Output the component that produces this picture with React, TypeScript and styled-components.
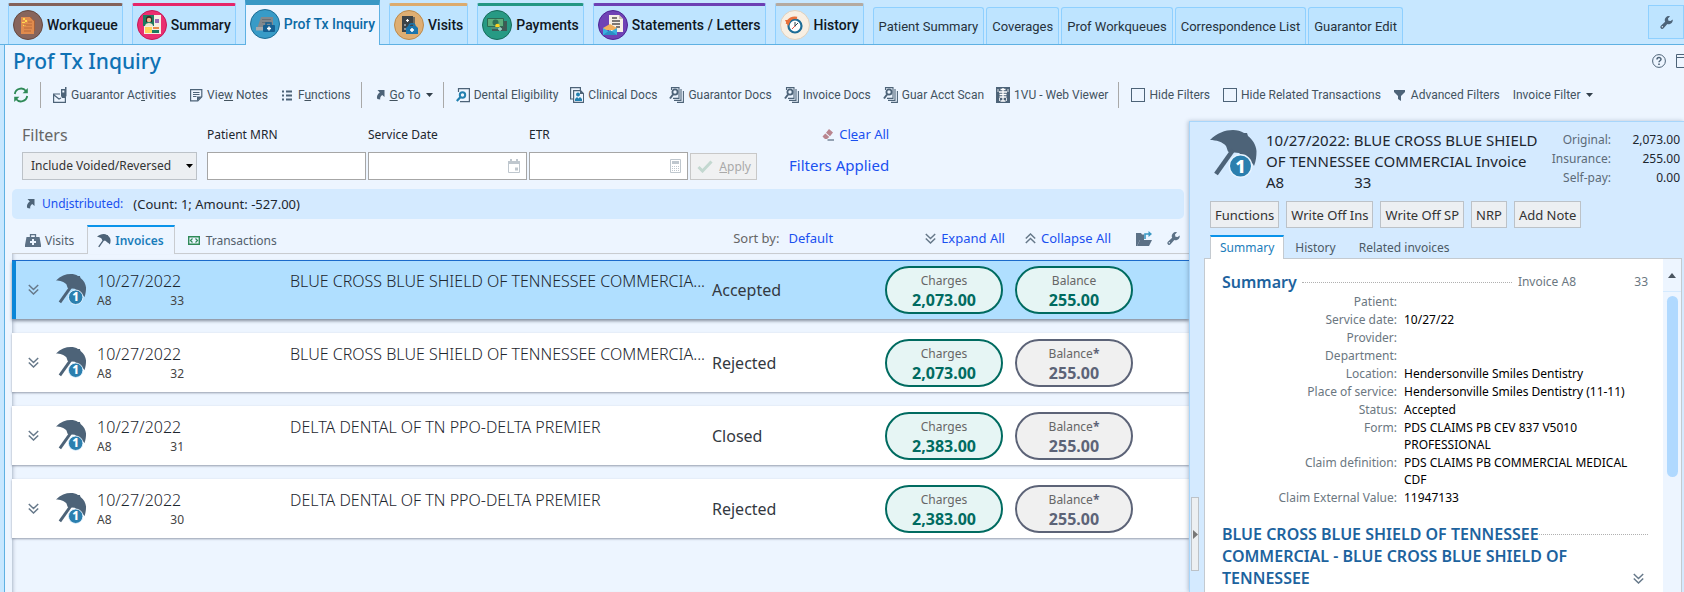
import React from "react";
import styled, { createGlobalStyle, css } from "styled-components";

const slate = "#4d6378";
const link = "#1a50f0";
const ui = `"Noto Sans", "Open Sans", sans-serif`;

const GlobalStyle = createGlobalStyle`
  * { box-sizing: border-box; }
  body { margin: 0; background: #c7e7ff; font: 12px/18px ${ui}; color: #1d262e; }
  button, input, select { font: inherit; color: inherit; margin: 0; }
  a { color: ${link}; text-decoration: none; }
  ul, dl, dd, h1, h2, p { margin: 0; padding: 0; font-weight: inherit; }
`;

const Screen = styled.div`
  display: flex;
  flex-direction: column;
  height: 100vh;
  overflow: hidden;
`;

/* ---------- activity tabs ---------- */
const TabBar = styled.nav`
  display: flex;
  align-items: flex-end;
  flex: none;
  height: 45px;
  padding-left: 8px;
  border-bottom: 1px solid #5fb1e3;
  font-family: Roboto, sans-serif;
`;

const ActivityTab = styled.button<{ $accent: string; $active?: boolean }>`
  display: flex;
  align-items: center;
  gap: 4px;
  flex: none;
  height: 41px;
  margin-right: 9px;
  padding: 0 4px;
  border: 1px solid #8fd0ff;
  border-top: 3px solid ${(p) => p.$accent};
  border-bottom: 0;
  border-radius: 2px 2px 0 0;
  background: #bee4ff;
  color: #10181f;
  font-size: 14px;
  font-weight: 500;
  white-space: nowrap;
  ${(p) =>
    p.$active &&
    css`
      height: 45px;
      margin-bottom: -1px;
      padding-bottom: 2px;
      border-top-width: 5px;
      border-color: ${p.$accent} #5fb1e3 #5fb1e3;
      border-radius: 0;
      background: #edf5ff;
      color: #0c6ba6;
    `}
`;

const PlainTab = styled.button`
  flex: none;
  height: 37px;
  margin-right: 2px;
  padding: 2px 5px 0;
  border: 1px solid #8fd0ff;
  border-bottom: 0;
  border-radius: 3px 3px 0 0;
  background: #bee4ff;
  color: #26323c;
  font-size: 13px;
  white-space: nowrap;
`;

const TabSettings = styled.button`
  display: grid;
  place-items: center;
  flex: none;
  align-self: flex-start;
  width: 36px;
  height: 34px;
  margin: 5px 0 0 auto;
  padding: 0;
  border: 1px solid #8fd0ff;
  background: #bee4ff;
`;

/* ---------- page frame ---------- */
const Page = styled.main`
  display: flex;
  flex-direction: column;
  flex: 1;
  min-height: 0;
  margin-left: 4px;
  border-left: 1px solid #5fb1e3;
  background: #edf5ff;
`;

const TitleRow = styled.header`
  display: flex;
  align-items: center;
  gap: 10px;
  height: 32px;
  padding-left: 8px;
  h1 {
    flex: 1;
    color: #0f72b5;
    font-size: 21px;
    font-weight: 500;
    line-height: 30px;
  }
`;

const Toolbar = styled.div`
  display: flex;
  align-items: center;
  gap: 12px;
  height: 26px;
  margin: 5px 0 13px;
  padding-left: 8px;
  color: #43535f;
  font-family: Roboto, sans-serif;
`;

const ToolGroup = styled.div<{ $gap: number }>`
  display: flex;
  align-items: center;
  gap: ${(p) => p.$gap}px;
`;

const ToolButton = styled.button`
  display: flex;
  align-items: center;
  gap: 4px;
  padding: 0;
  border: 0;
  background: none;
  white-space: nowrap;
`;

const ToolCheck = styled.label`
  display: flex;
  align-items: center;
  gap: 4px;
  white-space: nowrap;
  input {
    appearance: none;
    width: 14px;
    height: 14px;
    border: 1px solid ${slate};
  }
`;

const Divider = styled.span`
  width: 1px;
  height: 26px;
  margin-left: -2px;
  background: #a9a9a9;
`;

const Columns = styled.div`
  display: flex;
  flex: 1;
  min-height: 0;
`;

const Left = styled.section`
  display: flex;
  flex-direction: column;
  flex: 1;
  min-width: 0;
  padding: 4px 0 0 7px;
`;

/* ---------- filters ---------- */
const FilterRow = styled.form`
  display: flex;
  align-items: flex-end;
  padding-left: 10px;
`;

const Field = styled.div`
  position: relative;
  width: 159px;
  margin-right: 2px;
  label {
    display: block;
    margin-bottom: 7px;
    line-height: 20px;
  }
  input {
    display: block;
    width: 100%;
    height: 28px;
    border: 1px solid #a6a6a6;
    background: #fff;
  }
  svg {
    position: absolute;
    right: 7px;
    bottom: 7px;
  }
`;

const VoidedField = styled.div`
  position: relative;
  width: 175px;
  margin-right: 10px;
  label {
    display: block;
    margin-bottom: 7px;
    color: #666;
    font-size: 16px;
    line-height: 20px;
  }
  select {
    appearance: none;
    display: block;
    width: 100%;
    height: 28px;
    padding: 0 8px;
    border: 1px solid #bcc2c8;
    border-radius: 0;
    background: #eceff2;
    color: #333;
  }
  svg {
    position: absolute;
    right: 4px;
    bottom: 12px;
  }
`;

const ApplyButton = styled.button`
  display: flex;
  align-items: center;
  justify-content: space-between;
  width: 67px;
  height: 27px;
  padding: 0 5px 0 6px;
  border: 1px solid #c8c8c8;
  background: #f0f1f2;
  &:disabled { color: #a9a9a9; }
`;

const FilterLinks = styled.div`
  display: flex;
  flex-direction: column;
  align-items: flex-end;
  gap: 12px;
  margin-left: 32px;
  padding-bottom: 5px;
  font-size: 13px;
  a { display: flex; align-items: center; gap: 5px; }
  a:last-child { font-size: 15px; line-height: 20px; }
`;

const Undistributed = styled.div`
  display: flex;
  align-items: center;
  gap: 6px;
  height: 30px;
  margin: 9px 5px 6px 0;
  padding-left: 12px;
  border-radius: 5px;
  background: #d4eaff;
  span { margin-left: 4px; font-size: 13px; }
`;

/* ---------- list tabs ---------- */
const ListBar = styled.div`
  display: flex;
  align-items: center;
  height: 29px;
  padding-right: 9px;
  border-bottom: 1px solid #c9ccd0;
`;

const ListTab = styled.button<{ $active?: boolean }>`
  display: flex;
  align-items: center;
  gap: 4px;
  height: 29px;
  padding: 3px 13px 0;
  border: 0;
  background: none;
  color: #52606c;
  ${(p) =>
    p.$active &&
    css`
      padding: 1px 10px 0 9px;
      border: 1px solid #c9ccd0;
      border-top: 2px solid #0a93ea;
      border-bottom: 0;
      background: #edf5ff;
      color: #1a7dbb;
      font-weight: 600;
      margin-bottom: -1px;
    `}
`;

const ListActions = styled.div`
  display: flex;
  align-items: center;
  margin-left: auto;
  padding-bottom: 2px;
  color: #666;
  font-size: 13px;
  a { display: flex; align-items: center; gap: 5px; margin-left: 20px; }
  a:first-of-type { margin: 0 72px 0 9px; }
  button:first-of-type { margin-left: 25px; }
`;

const BareButton = styled.button`
  display: flex;
  padding: 0;
  border: 0;
  background: none;
  margin-left: 15px;
`;

/* ---------- invoice rows ---------- */
const InvoiceList = styled.ul`
  display: flex;
  flex-direction: column;
  gap: 14px;
  flex: 1;
  padding-top: 6px;
  list-style: none;
  box-shadow: inset 4px 0 4px -4px rgba(40, 60, 90, 0.5);
`;

const InvoiceRow = styled.li<{ $selected: boolean }>`
  display: grid;
  grid-template-columns: 85px 193px minmax(0, 422px) 1fr auto;
  height: 59px;
  padding-right: 56px;
  background: #fff;
  box-shadow: 0 1px 2px rgba(60, 70, 90, 0.5);
  ${(p) =>
    p.$selected &&
    css`
      background: linear-gradient(90deg, #0a86d8 4px, #b0dfff 4px);
      box-shadow: inset 0 1px #1b6bcb, 0 2px 3px rgba(60, 70, 90, 0.6);
    `}
`;

const Lead = styled.div`
  display: flex;
  align-items: center;
  gap: 17px;
  padding-left: 16px;
`;

const DateCell = styled.div`
  padding-top: 11px;
  font-weight: 300;
  p { font-size: 16px; line-height: 20px; }
  div { display: flex; justify-content: space-between; width: 87px; line-height: 19px; font-weight: 400; color: #444; }
`;

const Payer = styled.p`
  overflow: hidden;
  padding: 11px 2px 0 0;
  font-size: 16px;
  font-weight: 300;
  line-height: 20px;
  text-overflow: ellipsis;
  white-space: nowrap;
`;

const Status = styled.p`
  align-self: center;
  color: #33393f;
  font-size: 16px;
  line-height: 20px;
`;

const Pills = styled.div`
  display: flex;
  align-items: center;
  gap: 12px;
`;

const Pill = styled.div<{ $muted: boolean }>`
  display: flex;
  flex-direction: column;
  align-items: center;
  width: 118px;
  height: 48px;
  padding-top: 4px;
  border: 2px solid ${(p) => (p.$muted ? "#5c6377" : "#006b60")};
  border-radius: 24px;
  background: ${(p) => (p.$muted ? "#f0f0f0" : "#e6f5f4")};
  color: #666;
  b { color: #5c6377; }
  strong {
    color: ${(p) => (p.$muted ? "#5c6377" : "#006b60")};
    font-size: 16px;
    line-height: 20px;
  }
`;

/* ---------- detail panel ---------- */
const Panel = styled.aside`
  position: relative;
  display: flex;
  flex-direction: column;
  flex: none;
  width: 495px;
  padding: 8px 2px 0 14px;
  border: 1px solid #a8d6fb;
  border-width: 1px 0 0 1px;
  background: #d4eaff;
  box-shadow: -1px 0 4px rgba(50, 70, 100, 0.3);
`;

const Handle = styled.button`
  position: absolute;
  left: 1px;
  bottom: 21px;
  display: grid;
  place-items: center;
  width: 8px;
  height: 74px;
  padding: 0;
  border: 1px solid #bcc2c8;
  background: #eceff2;
`;

const PanelHead = styled.div`
  display: flex;
  padding-left: 6px;
  h2 {
    flex: 1;
    margin-left: 8px;
    font-size: 15px;
    line-height: 21px;
    white-space: nowrap;
  }
  h2 span { margin-right: 70px; }
`;

const Amounts = styled.dl`
  display: grid;
  grid-template-columns: auto 56px;
  column-gap: 13px;
  align-content: start;
  padding-right: 2px;
  text-align: right;
  line-height: 19px;
  dt { color: #5d6b78; }
`;

const PanelButtons = styled.div`
  display: flex;
  gap: 7px;
  margin-top: 8px;
  padding-left: 6px;
  button {
    height: 27px;
    padding: 0 4px;
    border: 1px solid #bcc2c8;
    background: #eceff2;
    color: #333;
    font-size: 13px;
    white-space: nowrap;
  }
`;

const PanelTabs = styled.div`
  position: relative;
  display: flex;
  margin: 7px 0 -1px 6px;
`;

const PanelTab = styled.button<{ $active?: boolean }>`
  height: 24px;
  padding: 2px 12px 0 11px;
  border: 0;
  background: none;
  color: #4c5a66;
  ${(p) =>
    p.$active &&
    css`
      padding: 0 9px;
      border: 1px solid #c4cad0;
      border-top: 2px solid #0a93ea;
      border-bottom: 0;
      background: #fff;
      color: #1a7dbb;
    `}
`;

const Sheet = styled.div`
  display: flex;
  flex: 1;
  min-height: 0;
  border: 1px solid #c4cad0;
  border-bottom: 0;
  background: #fff;
`;

const SheetBody = styled.div`
  flex: 1;
  min-width: 0;
  padding: 12px 15px 0 17px;
`;

const SectionTitle = styled.h2`
  color: #1d639e;
  font-size: 16px;
  font-weight: 600;
  line-height: 22px;
`;

const SummaryHead = styled.div`
  display: flex;
  align-items: center;
  color: #6b7781;
  span:last-child { width: 72px; text-align: right; }
`;

const Dots = styled.i`
  flex: 1;
  margin: 0 6px 0 5px;
  border-top: 1px dotted #b0b0b0;
`;

const Facts = styled.dl`
  display: grid;
  grid-template-columns: 175px 1fr;
  column-gap: 7px;
  row-gap: 1px;
  line-height: 17px;
  color: #000;
  dt { color: #6b7781; text-align: right; }
`;

const Coverage = styled.div`
  display: grid;
  grid-template-columns: auto 1fr;
  margin-top: 17px;
  i { margin: 11px 0 0; }
`;

const CoverageLast = styled.div`
  grid-column: 1 / -1;
  display: flex;
  justify-content: space-between;
  align-items: flex-end;
  padding: 0 4px 0 0;
  button { margin-bottom: 5px; }
`;

const Scroller = styled.div`
  display: flex;
  flex-direction: column;
  align-items: center;
  width: 18px;
  background: #edf5ff;
  button {
    display: grid;
    place-items: center;
    width: 18px;
    height: 33px;
    padding: 0;
    border: 0;
    border-bottom: 1px solid #d4eaff;
    background: none;
  }
`;

const Thumb = styled.span`
  width: 11px;
  height: 181px;
  margin-top: 4px;
  border-radius: 6px;
  background: #b0d9ff;
`;

/* ---------- icons ---------- */
const Drawing = styled.svg`
  flex: none;
`;

const Svg = ({ w, h, vb, children }: { w: number; h: number; vb?: string; children: React.ReactNode }) => (
  <Drawing width={w} height={h} viewBox={vb || `0 0 ${w} ${h}`} fill="none" aria-hidden="true">
    {children}
  </Drawing>
);

const Disc = ({ fill, ring, children }: { fill: string; ring: string; children: React.ReactNode }) => (
  <Svg w={30} h={30}>
    <circle cx="15" cy="15" r="14.5" fill={fill} stroke={ring} />
    {children}
  </Svg>
);

const WorkIcon = () => (
  <Disc fill="#87655c" ring="#65483f">
    <path d="M8 7h9l4 4v13H8z" fill="#e08b4d" />
    <path d="M17 7h2v3h3v11h-1V11z" fill="#a65f35" />
    <path d="M10 8h2v2h-2zM12 10h2v2h-2zM9 12h3v1H9zM10 15h3v1h-3z" fill="#ffd84f" />
    <path d="M11 15h8M11 18h8M11 21h7M15 12h4" stroke="#b8683a" />
  </Disc>
);
const SummaryIcon = () => (
  <Disc fill="#ea2e70" ring="#c51858">
    <path d="M7 5h17v19H7z" fill="#f4efe4" />
    <path d="M6 5h11v11H6z" fill="#1d7a5f" />
    <path d="M9 9c0-4 6-4 6 0v3H9z" fill="#3a2a22" />
    <circle cx="12" cy="10" r="2.2" fill="#f1b98d" />
    <path d="M8 16c0-4 8-4 8 0z" fill="#f0e3cf" />
    <path d="M8 17h7v6H8z" fill="#ffd45a" />
    <path d="M18 9h4v4h-4z" fill="#9a68b5" />
    <path d="M16 17h6v2h-6z" fill="#e98b4e" />
    <path d="M15 20h7v3h-7z" fill="#1d7a5f" />
  </Disc>
);
const ProfIcon = () => (
  <Disc fill="#389bc7" ring="#1d6c94">
    <path d="M11 8h12v8l-2 5H6l2-4z" fill="#82888d" />
    <path d="M12 10.500h9M12 13.500h9" stroke="#6a7075" />
    <path d="M6 18h12v3.500H6z" fill="#a3a9ad" />
    <rect x="13" y="16" width="12" height="7" rx="1" fill="#155f92" />
    <path d="M16 16v-2h5v2" stroke="#155f92" strokeWidth="1.5" />
    <path d="M19 17.500v4M17 19.500h4" stroke="#fff" strokeWidth="1.500" />
  </Disc>
);
const VisitsIcon = () => (
  <Disc fill="#deae72" ring="#bd8a4b">
    <path d="M8 6h11v16H8z" fill="#3c4347" />
    <path d="M19 7h2v9h-2z" fill="#6f6a5f" />
    <path d="M13.500 9v3M12 10.500h3" stroke="#fff" strokeWidth="1.200" />
    <path d="M10 14h2v2h-2zM10 18h2v2h-2z" fill="#8d9498" />
    <path d="M12 18l2-2h8l2 2v6H12z" fill="#1a75ad" />
    <path d="M15 16c0-3 6-3 6 0" stroke="#1a75ad" strokeWidth="1.500" />
    <path d="M18 18v4M16 20h4" stroke="#fff" strokeWidth="1.500" />
  </Disc>
);
const PaymentsIcon = () => (
  <Disc fill="#279a84" ring="#176b5a">
    <path d="M10 11h15v10H10z" fill="#3f5a55" />
    <path d="M5.500 8.500h16v8h-16z" fill="#5fae7c" stroke="#2d6a52" />
    <circle cx="13.500" cy="12.500" r="3" fill="#2f6f56" />
    <circle cx="15.500" cy="16" r="2.300" fill="#ffd21f" />
    <path d="M9 17h8v2H9z" fill="#4d8f78" />
    <path d="M18 17v4M16 19h4" stroke="#9fd8c8" strokeWidth="1.300" />
  </Disc>
);
const LettersIcon = () => (
  <Disc fill="#6f42b5" ring="#4d2595">
    <path d="M11 5h10l4 4v13H11z" fill="#f7f0e6" />
    <path d="M21 5v4h4z" fill="#cfc4b4" />
    <path d="M14 8h5M14 11h8M14 14h8M18 17h4" stroke="#56504d" strokeWidth="1.300" />
    <path d="M5 18l7-4 7 4v2H5z" fill="#f3b05b" />
    <path d="M5 18l7 4 7-4v7H5z" fill="#3bb0e0" />
    <path d="M5 25l7-5 7 5z" fill="#2a90c4" />
  </Disc>
);
const HistoryIcon = () => (
  <Disc fill="#f8efe3" ring="#e0d0bd">
    <circle cx="15" cy="16" r="6.500" fill="#fff" stroke="#1d6c96" strokeWidth="2.200" />
    <path d="M7 14c1-5 6-7 10-6" stroke="#e8703a" strokeWidth="2.600" />
    <path d="M5 10l6 0-3 6z" fill="#e8703a" />
    <path d="M15 12v4.500M15 16l3-3" stroke="#37474f" />
    <path d="M15 16l-3 3" stroke="#e74c3c" />
  </Disc>
);

const Wrench = ({ color = slate }: { color?: string }) => (
  <Svg w={13} h={13} vb="0 0 16 16">
    <path d="M15.600 4.200a5 5 0 0 1-6.600 5.600l-4.600 5.300a2.200 2.200 0 0 1-3.300-3l5.200-4.900A5 5 0 0 1 12.400.4L9.800 3.200l.6 2.600 2.700.4z" fill={color} />
    <circle cx="2.900" cy="13.200" r=".9" fill="#dcebfa" />
  </Svg>
);
const Help = () => (
  <Svg w={14} h={14}>
    <circle cx="7" cy="7" r="6.400" stroke={slate} />
    <path d="M5 5.500C5 3 9 3 9 5.300c0 1.500-2 1.400-2 3" stroke={slate} strokeWidth="1.500" />
    <path d="M6.200 9.500h1.600v1.500H6.200z" fill={slate} />
  </Svg>
);
const WindowEdge = () => (
  <Svg w={8} h={14}>
    <path d="M8 .5H.5v13H8M.5 3.500H8" stroke={slate} />
  </Svg>
);
const Refresh = () => (
  <Svg w={17} h={16}>
    <path d="M1.800 7A6.300 6.300 0 0 1 13 4M14.200 9A6.300 6.300 0 0 1 3 12" stroke="#2f8a57" strokeWidth="1.800" />
    <path d="M14.800 1v5.200H9.600zM1.200 15V9.800h5.200z" fill="#2f8a57" />
  </Svg>
);
const Mailbox = () => (
  <Svg w={14} h={16}>
    <path d="M1 7h6M.6 6.500v8.900h11.800V10M1 8l5 4 2-1" stroke={slate} strokeWidth="1.200" />
    <path d="M8 2h4V0h1.500v9L12 11H9L8 9z" fill={slate} />
    <path d="M9.300 3.500h2v2h-2z" fill="#edf5ff" />
  </Svg>
);
const Note = () => (
  <Svg w={13} h={13}>
    <path d="M.6.600h11.200v7.200l-4 4H.6z" stroke={slate} strokeWidth="1.200" />
    <path d="M3 3.500h6.500M3 5.500h6.500M3 7.500h3.500" stroke={slate} />
    <path d="M7 12V7.500h5z" fill={slate} />
  </Svg>
);
const Bullets = () => (
  <Svg w={12} h={11}>
    <path d="M0 1.500h2M0 5.500h2M0 9.500h2M4 1.500h6M4 5.500h6M4 9.500h6" stroke={slate} strokeWidth="1.800" />
  </Svg>
);
const Jump = () => (
  <Svg w={12} h={10} vb="-2 0 12 10">
    <path d="M1.500 0H8.500v7L6.200 4.900C4.500 6 4 7.500 4.200 9.500L1.300 9C.3 6.500 1.500 4 3.800 2.500z" fill={slate} />
  </Svg>
);
const Caret = ({ color = "#33404b" }: { color?: string }) => (
  <Svg w={8} h={4} vb="-1 0 8 4">
    <path d="M0 0h7L3.500 4z" fill={color} />
  </Svg>
);
const MagnifyPage = () => (
  <Svg w={14} h={15}>
    <path d="M2.500 4V.6h10.900v13H4" stroke={slate} strokeWidth="1.200" />
    <circle cx="6.500" cy="7" r="2.700" stroke="#2280b0" strokeWidth="2" />
    <path d="M4.500 9L.8 13" stroke="#2280b0" strokeWidth="2.200" />
  </Svg>
);
const Clinical = () => (
  <Svg w={14} h={16}>
    <path d="M3 12H.6V.600h9.800V3" stroke={slate} strokeWidth="1.200" />
    <path d="M3.600 3.600h7l3 3v8.800h-10z" stroke={slate} strokeWidth="1.200" />
    <path d="M10 3v4h4z" fill={slate} />
    <circle cx="8" cy="7.500" r="2" fill="#2280b0" />
    <path d="M5 14v-2l2-2 1.500 1.500L10 10l2 2v2z" fill="#2280b0" />
  </Svg>
);
const DocStack = () => (
  <Svg w={15} h={16}>
    <path d="M2.500 3V.6h7.500v10.800H4M12 2v11.400H5M14.400 4v11.400H8" stroke={slate} strokeWidth="1.100" />
    <circle cx="6" cy="5" r="2.600" stroke={slate} strokeWidth="1.800" />
    <path d="M4 7.500L1 11.500" stroke={slate} strokeWidth="2" />
  </Svg>
);
const Xray = () => (
  <Svg w={14} h={16}>
    <path d="M0 0h14v16H0z" fill={slate} />
    <path d="M7 1v13M4.500 2.500h5M3 5h8M3.500 7.500h7M3.500 10h7M4.500 14h5" stroke="#fff" strokeWidth="1.300" />
    <path d="M2 2v3M12 2v3M3.500 14v-3M10.500 14v-3" stroke="#fff" strokeWidth=".8" />
  </Svg>
);
const Funnel = () => (
  <Svg w={13} h={11}>
    <path d="M0 0h11v2L7 6v5L4 9V6L0 2z" fill={slate} />
  </Svg>
);
const CalendarIcon = () => (
  <Svg w={12} h={14}>
    <path d="M.5 2.500h11v11H.500z" stroke="#bfc7ce" />
    <path d="M0 2h12v3H0zM2 0h2v2H2zM8 0h2v2H8zM7 8.500h3v3H7z" fill="#bfc7ce" />
  </Svg>
);
const CalcIcon = () => (
  <Svg w={11} h={14}>
    <path d="M.5.500h10v13H.500z" stroke="#bfc7ce" />
    <path d="M2 2h7v3H2z" fill="#bfc7ce" />
    <path d="M2 7.500h7M2 9.500h7M2 11.500h7" stroke="#bfc7ce" strokeDasharray="1 1" />
  </Svg>
);
const CheckMark = () => (
  <Svg w={16} h={13}>
    <path d="M1.500 7l4 4L14.500 1.500" stroke="#c3d8d0" strokeWidth="3" />
  </Svg>
);
const Eraser = () => (
  <Svg w={12} h={13}>
    <path d="M7 1l4 3.500-3 3.700-4-3.500zM3.300 5.500l4 3.500L5 11H3L.5 8.500z" fill="#b9858f" />
    <path d="M5.500 12H12" stroke="#7d8ea0" strokeWidth="1.600" />
  </Svg>
);
const Bag = () => (
  <Svg w={16} h={13}>
    <path d="M1.500 3h13L16 11v2H0v-2z" fill="#5c7186" />
    <path d="M5.500 3V.7h5V3" stroke="#5c7186" strokeWidth="1.300" />
    <path d="M8 5v6M5 8h6" stroke="#edf5ff" strokeWidth="2" />
  </Svg>
);
const Cash = () => (
  <Svg w={14} h={9}>
    <path d="M.7.700h10.600v7.600H.7z" stroke="#2f8a57" strokeWidth="1.400" />
    <path d="M4.500 2.500l-2 2 2 2M7.500 2.500l2 2-2 2" stroke="#2f8a57" strokeWidth="1.200" />
  </Svg>
);
const Chevrons = ({ up }: { up?: boolean }) => (
  <Svg w={11} h={11}>
    <path d={up ? "M.8 5.500L5.500 1l4.700 4.500M.8 10L5.500 5.500 10.200 10" : "M.8 1L5.500 5.500 10.200 1M.8 5.500L5.500 10l4.700-4.500"} stroke="#67798a" strokeWidth="1.500" />
  </Svg>
);
const FolderOut = () => (
  <Svg w={16} h={15}>
    <path d="M0 2h5l1 1.500h2V9H4L1 15H0z" fill="#5c7186" />
    <path d="M4 9h12l-3 6H1z" fill="#5c7186" />
    <path d="M9 8V3h5" stroke="#3a98c4" strokeWidth="1.600" />
    <path d="M12.500 0L16 3l-3.500 3z" fill="#3a98c4" />
  </Svg>
);
const Canopy = () => (
  <>
    <path d="M0 10C7 3 15 0 23 0c4 0 8 1 11 3l3 0 1 3c5 4 8 9 8.500 15 0 5-.5 10-2.500 15C43 33 40 31 36 29L29 23 20 22C17 22 18 20 16 16 13 12 6 10 0 10z" fill={slate} />
    <path d="M23 20L6 44" stroke={slate} strokeWidth="4.500" />
  </>
);
const Umbrella = ({ size }: { size: number }) => (
  <Svg w={size} h={size} vb="0 0 48 48">
    <Canopy />
    <circle cx="30.500" cy="36" r="11.200" fill="#2b7fae" stroke="#e8f4ff" strokeWidth="1.400" />
    <text x="30.500" y="42.500" textAnchor="middle" fontFamily={ui} fontWeight="800" fontSize="18" fill="#fff">1</text>
  </Svg>
);
const SmallUmbrella = () => (
  <Svg w={14} h={14} vb="0 0 48 48">
    <Canopy />
  </Svg>
);

/* ---------- data ---------- */
const bcbs = "BLUE CROSS BLUE SHIELD OF TENNESSEE COMMERCIA...";
const delta = "DELTA DENTAL OF TN PPO-DELTA PREMIER";
const invoices = [
  { no: 33, payer: bcbs, status: "Accepted", charges: "2,073.00" },
  { no: 32, payer: bcbs, status: "Rejected", charges: "2,073.00" },
  { no: 31, payer: delta, status: "Closed", charges: "2,383.00" },
  { no: 30, payer: delta, status: "Rejected", charges: "2,383.00" },
];
const facts = [
  ["Patient:", ""],
  ["Service date:", "10/27/22"],
  ["Provider:", ""],
  ["Department:", ""],
  ["Location:", "Hendersonville Smiles Dentistry"],
  ["Place of service:", "Hendersonville Smiles Dentistry (11-11)"],
  ["Status:", "Accepted"],
  ["Form:", "PDS CLAIMS PB CEV 837 V5010 PROFESSIONAL"],
  ["Claim definition:", "PDS CLAIMS PB COMMERCIAL MEDICAL CDF"],
  ["Claim External Value:", "11947133"],
];

export default function App() {
  return (
    <Screen>
      <GlobalStyle />
      <TabBar>
        <ActivityTab $accent="#84625a"><WorkIcon />Workqueue</ActivityTab>
        <ActivityTab $accent="#e6266a"><SummaryIcon />Summary</ActivityTab>
        <ActivityTab $accent="#3a98c4" $active><ProfIcon />Prof Tx Inquiry</ActivityTab>
        <ActivityTab $accent="#dcab6e"><VisitsIcon />Visits</ActivityTab>
        <ActivityTab $accent="#249783"><PaymentsIcon />Payments</ActivityTab>
        <ActivityTab $accent="#6d40b4"><LettersIcon />Statements / Letters</ActivityTab>
        <ActivityTab $accent="#b5aaa0"><HistoryIcon />History</ActivityTab>
        <PlainTab>Patient Summary</PlainTab>
        <PlainTab>Coverages</PlainTab>
        <PlainTab>Prof Workqueues</PlainTab>
        <PlainTab>Correspondence List</PlainTab>
        <PlainTab>Guarantor Edit</PlainTab>
        <TabSettings aria-label="Tab settings"><Wrench /></TabSettings>
      </TabBar>
      <Page>
        <TitleRow>
          <h1>Prof Tx Inquiry</h1>
          <Help />
          <WindowEdge />
        </TitleRow>
        <Toolbar>
          <ToolButton aria-label="Refresh"><Refresh /></ToolButton>
          <Divider />
          <ToolGroup $gap={14}>
            <ToolButton><Mailbox /><span>Guarantor Ac<u>t</u>ivities</span></ToolButton>
            <ToolButton><Note /><span>Vie<u>w</u> Notes</span></ToolButton>
            <ToolButton><Bullets /><span>F<u>u</u>nctions</span></ToolButton>
          </ToolGroup>
          <Divider />
          <ToolButton><Jump /><span><u>G</u>o To</span><Caret /></ToolButton>
          <Divider />
          <ToolGroup $gap={12}>
            <ToolButton><MagnifyPage />Dental Eligibility</ToolButton>
            <ToolButton><Clinical />Clinical Docs</ToolButton>
            <ToolButton><DocStack />Guarantor Docs</ToolButton>
            <ToolButton><DocStack />Invoice Docs</ToolButton>
            <ToolButton><DocStack />Guar Acct Scan</ToolButton>
            <ToolButton><Xray />1VU - Web Viewer</ToolButton>
          </ToolGroup>
          <Divider />
          <ToolGroup $gap={13}>
            <ToolCheck><input type="checkbox" />Hide Filters</ToolCheck>
            <ToolCheck><input type="checkbox" />Hide Related Transactions</ToolCheck>
            <ToolButton><Funnel />Advanced Filters</ToolButton>
            <ToolButton>Invoice Filter<Caret /></ToolButton>
          </ToolGroup>
        </Toolbar>
        <Columns>
          <Left>
            <FilterRow>
              <VoidedField>
                <label htmlFor="voided">Filters</label>
                <select id="voided"><option>Include Voided/Reversed</option></select>
                <Caret color="#000" />
              </VoidedField>
              <Field><label htmlFor="mrn">Patient MRN</label><input id="mrn" /></Field>
              <Field><label htmlFor="date">Service Date</label><input id="date" /><CalendarIcon /></Field>
              <Field><label htmlFor="etr">ETR</label><input id="etr" /><CalcIcon /></Field>
              <ApplyButton type="button" disabled><CheckMark /><span><u>A</u>pply</span></ApplyButton>
              <FilterLinks>
                <a href="#clear"><Eraser /><span>Cl<u>e</u>ar All</span></a>
                <a href="#applied">Filters Applied</a>
              </FilterLinks>
            </FilterRow>
            <Undistributed>
              <Jump />
              <a href="#undistributed">Und<u>i</u>stributed:</a>
              <span>(Count: 1; Amount: -527.00)</span>
            </Undistributed>
            <ListBar>
              <ListTab><Bag />Visits</ListTab>
              <ListTab $active><SmallUmbrella />Invoices</ListTab>
              <ListTab><Cash />Transactions</ListTab>
              <ListActions>
                Sort by:
                <a href="#sort">Default</a>
                <a href="#expand"><Chevrons />Expand All</a>
                <a href="#collapse"><Chevrons up />Collapse All</a>
                <BareButton aria-label="Open folder"><FolderOut /></BareButton>
                <BareButton aria-label="Settings"><Wrench color="#5c7186" /></BareButton>
              </ListActions>
            </ListBar>
            <InvoiceList>
              {invoices.map((inv, i) => (
                <InvoiceRow key={inv.no} $selected={i === 0}>
                  <Lead><Chevrons /><Umbrella size={31} /></Lead>
                  <DateCell>
                    <p>10/27/2022</p>
                    <div><span>A8</span><span>{inv.no}</span></div>
                  </DateCell>
                  <Payer>{inv.payer}</Payer>
                  <Status>{inv.status}</Status>
                  <Pills>
                    <Pill $muted={false}>Charges<strong>{inv.charges}</strong></Pill>
                    <Pill $muted={i > 0}><span>Balance{i > 0 && <b>*</b>}</span><strong>255.00</strong></Pill>
                  </Pills>
                </InvoiceRow>
              ))}
            </InvoiceList>
          </Left>
          <Panel>
            <Handle aria-label="Collapse panel"><Svg w={5} h={9}><path d="M0 0l5 4.500L0 9z" fill="#777" /></Svg></Handle>
            <PanelHead>
              <Umbrella size={48} />
              <h2>
                10/27/2022: BLUE CROSS BLUE SHIELD<br />
                OF TENNESSEE COMMERCIAL Invoice<br />
                <span>A8</span>33
              </h2>
              <Amounts>
                <dt>Original:</dt><dd>2,073.00</dd>
                <dt>Insurance:</dt><dd>255.00</dd>
                <dt>Self-pay:</dt><dd>0.00</dd>
              </Amounts>
            </PanelHead>
            <PanelButtons>
              <button>Functions</button>
              <button>Write Off Ins</button>
              <button>Write Off SP</button>
              <button>NRP</button>
              <button>Add Note</button>
            </PanelButtons>
            <PanelTabs>
              <PanelTab $active>Summary</PanelTab>
              <PanelTab>History</PanelTab>
              <PanelTab>Related invoices</PanelTab>
            </PanelTabs>
            <Sheet>
              <SheetBody>
                <SummaryHead>
                  <SectionTitle>Summary</SectionTitle>
                  <Dots />
                  <span>Invoice A8</span>
                  <span>33</span>
                </SummaryHead>
                <Facts>
                  {facts.map(([name, value]) => (
                    <React.Fragment key={name}>
                      <dt>{name}</dt>
                      <dd>{value}</dd>
                    </React.Fragment>
                  ))}
                </Facts>
                <Coverage>
                  <SectionTitle>BLUE CROSS BLUE SHIELD OF TENNESSEE</SectionTitle>
                  <Dots />
                  <CoverageLast>
                    <SectionTitle>COMMERCIAL - BLUE CROSS BLUE SHIELD OF<br />TENNESSEE</SectionTitle>
                    <BareButton aria-label="Expand coverage"><Chevrons /></BareButton>
                  </CoverageLast>
                </Coverage>
              </SheetBody>
              <Scroller>
                <button aria-label="Scroll up"><Svg w={8} h={5}><path d="M0 5h8L4 0z" fill="#4a5560" /></Svg></button>
                <Thumb />
              </Scroller>
            </Sheet>
          </Panel>
        </Columns>
      </Page>
    </Screen>
  );
}
